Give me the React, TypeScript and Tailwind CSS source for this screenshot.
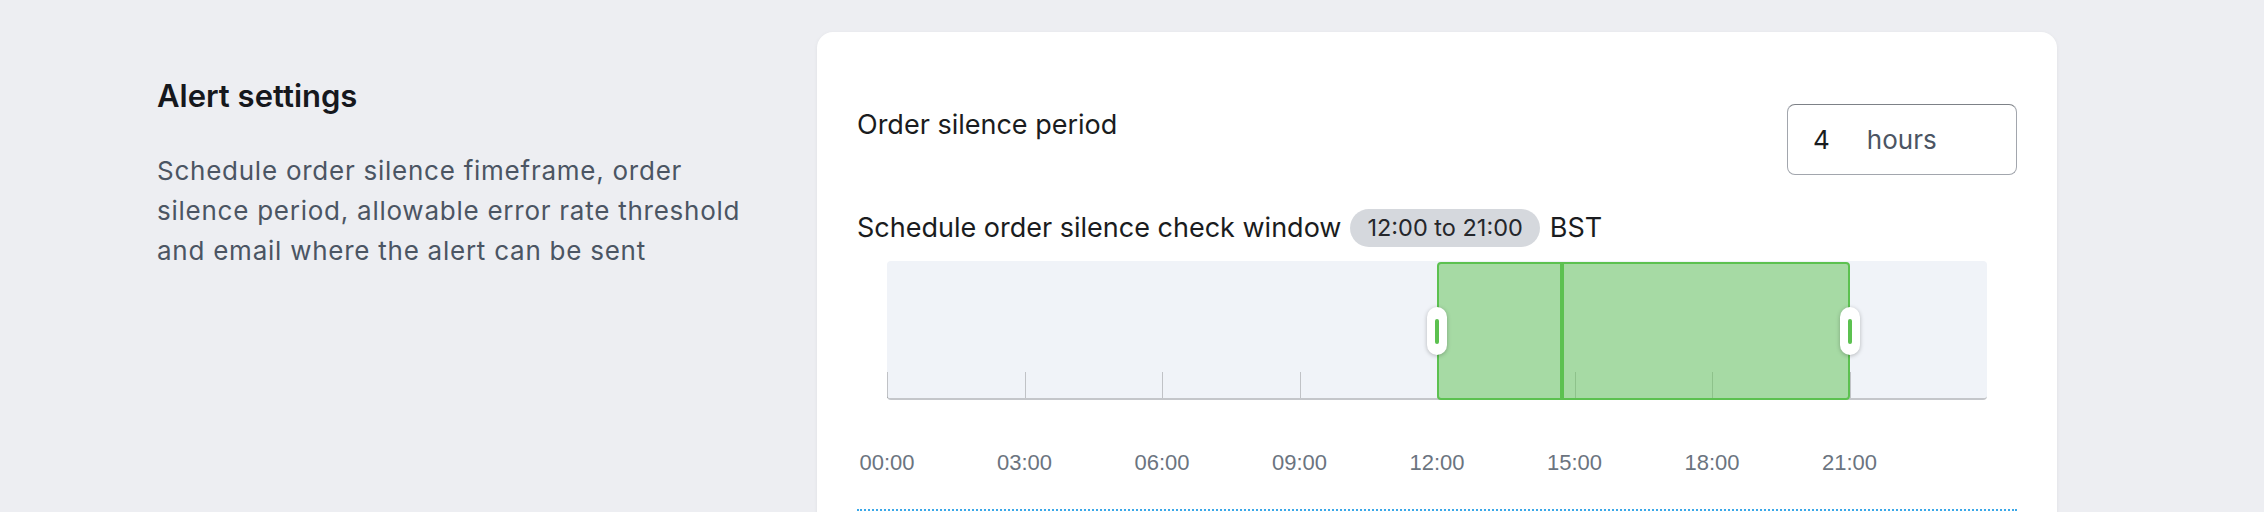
import React from "react";

const labels = ["00:00", "03:00", "06:00", "09:00", "12:00", "15:00", "18:00", "21:00"];

export default function App() {
  return (
    <div
      className="min-h-[512px] bg-[#EDEEF2] flex items-start pl-[157px] pt-[32px]"
      style={{ fontFamily: "Inter, 'Noto Sans', sans-serif" }}
    >
      <div className="w-[660px] shrink-0 pt-[45px]">
        <h2 className="text-[31px] leading-[38px] font-semibold text-[#16181d]">Alert settings</h2>
        <p className="mt-[36px] w-[630px] text-[26px] leading-[40px] tracking-[0.75px] text-[#4B5563]">
          Schedule order silence fimeframe, order
          <br />
          silence period, allowable error rate threshold
          <br />
          and email where the alert can be sent
        </p>
      </div>

      <div className="w-[1240px] shrink-0 bg-white rounded-2xl shadow-[0_1px_4px_rgba(0,0,0,0.06)] px-[40px] pt-[72px] pb-[60px]">
        <div className="flex items-start justify-between">
          <div className="text-[27px] leading-[42px] text-[#1a1c20]">Order silence period</div>
          <div className="w-[230px] h-[71px] rounded-lg border-[1.5px] border-[#A2A6AD] border-t-[#7D8187] flex items-center pl-[25px] text-[26px]">
            <span className="text-[#1a1c20]">4</span>
            <span className="ml-[37px] text-[#4B5563]">hours</span>
          </div>
        </div>

        <div className="mt-[34px] h-[38px] flex items-center text-[27px] text-[#1a1c20]">
          <span>Schedule order silence check window</span>
          <span className="ml-[9px] h-[38px] rounded-full bg-[#D5D8DD] px-[17px] flex items-center text-[23.5px] text-[#25272b]">
            12:00 to 21:00
          </span>
          <span className="ml-[10px]">BST</span>
        </div>

        <div className="mt-[14px] px-[30px]">
          <div className="relative h-[139px] bg-[#F0F3F8] rounded-[4px] border-b-2 border-[#C4C6CA]">
            <div className="absolute inset-0 grid grid-cols-8">
              {labels.map((l) => (
                <div key={l} className="relative">
                  <div className="absolute left-0 bottom-0 h-[26px] w-px bg-[rgba(0,0,0,0.2)]" />
                </div>
              ))}
            </div>
            <div className="absolute top-px -bottom-[2px] left-[50%] w-[37.5%] rounded-[4px] border-2 border-[#5CC150] bg-[rgba(92,193,80,0.5)]" />
            <div className="absolute top-px -bottom-[2px] left-[61.2%] w-[4px] bg-[#5CC150]" />
            <div className="absolute top-[46px] left-[50%] -ml-[10px] w-[20px] h-[48px] rounded-full bg-white shadow-[0_1px_4px_rgba(0,0,0,0.25)] flex items-center justify-center">
              <div className="w-[4px] h-[25px] rounded-full bg-[#5CC150]" />
            </div>
            <div className="absolute top-[46px] left-[87.5%] -ml-[10px] w-[20px] h-[48px] rounded-full bg-white shadow-[0_1px_4px_rgba(0,0,0,0.25)] flex items-center justify-center">
              <div className="w-[4px] h-[25px] rounded-full bg-[#5CC150]" />
            </div>
          </div>
          <div
            className="mt-[50px] grid grid-cols-8 h-[26px] text-[22px] leading-[26px] text-[#6B7480]"
            style={{ fontFamily: "'Liberation Sans', Arial, sans-serif" }}
          >
            {labels.map((l) => (
              <div key={l} className="relative">
                <span className="absolute left-0 -translate-x-1/2 whitespace-nowrap">{l}</span>
              </div>
            ))}
          </div>
        </div>

        <div className="mt-[33px] border-t-2 border-dotted border-[#3BA8E8]" />
        <div className="h-[200px]" />
      </div>
    </div>
  );
}
